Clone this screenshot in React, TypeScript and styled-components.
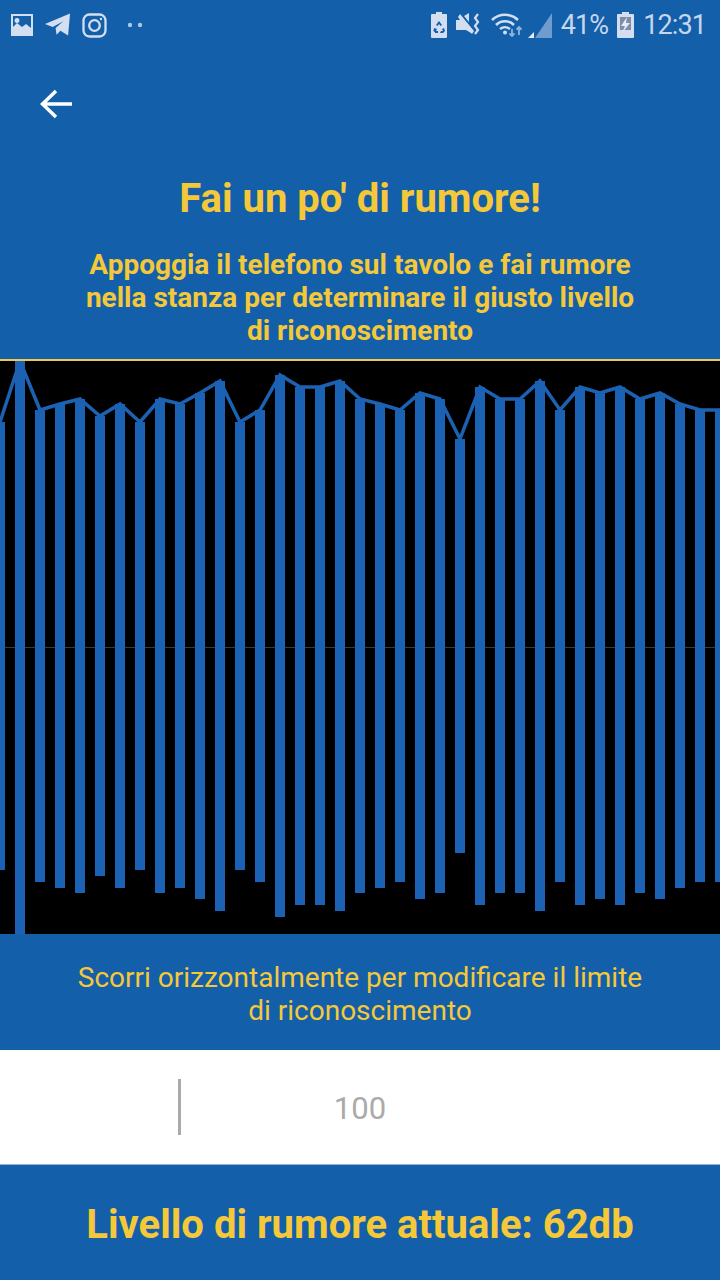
import React from 'react';
import styled, { createGlobalStyle } from 'styled-components';

const BAR_BOTTOMS = [
  870, 935, 882, 888, 893, 876, 888, 870, 893, 888, 899, 911, 870, 882, 917, 905, 905, 911, 893,
  888, 882, 899, 893, 853, 905, 893, 893, 911, 882, 905, 899, 905, 893, 899, 888, 882, 882,
];

const CHART_TOP = 361;
const CHART_HEIGHT = 573;

const topOf = (bottom: number) => Math.max(1292 - bottom, 361) - CHART_TOP;

const GlobalStyle = createGlobalStyle`
  html, body {
    margin: 0;
    padding: 0;
    background: #135fa9;
  }
  * {
    box-sizing: border-box;
  }
`;

const Screen = styled.div`
  width: 720px;
  height: 1280px;
  display: flex;
  flex-direction: column;
  overflow: hidden;
  background: #135fa9;
  font-family: Roboto, "Liberation Sans", sans-serif;
  color: #f5c83a;
`;

const StatusBar = styled.div`
  height: 50px;
  display: flex;
  align-items: center;
  justify-content: space-between;
  padding: 0 14px 0 10px;
  color: #d3dff0;
`;

const StatusGroup = styled.div`
  display: flex;
  align-items: center;
  gap: ${(p: { $gap: number }) => p.$gap}px;
`;

const StatusText = styled.span`
  font-size: 27px;
  line-height: 50px;
  letter-spacing: -0.9px;
  color: #c6d6ec;
`;

const Header = styled.div`
  height: 72px;
  padding: 36px 0 0 38px;
`;

const Title = styled.h1`
  margin: 0;
  padding-top: 55px;
  font-size: 40px;
  line-height: 44px;
  font-weight: 700;
  text-align: center;
`;

const Subtitle = styled.p`
  margin: 0;
  padding: 27px 78px 0;
  font-size: 28px;
  line-height: 33px;
  font-weight: 700;
  text-align: center;
`;

const Chart = styled.div`
  margin-top: 12px;
  height: 575px;
  flex: none;
  background: #000;
  border-top: 2px solid #f0c950;
`;

const Hint = styled.p`
  margin: 0;
  height: 116px;
  padding: 27px 70px 0;
  font-size: 28px;
  line-height: 33px;
  text-align: center;
`;

const Slider = styled.div`
  position: relative;
  height: 115px;
  display: flex;
  align-items: center;
  justify-content: center;
  padding-top: 2px;
  background: #fff;
  border-bottom: 1px solid #8db4da;
  font-size: 31px;
  color: #aaa;
`;

const Marker = styled.div`
  position: absolute;
  left: 178px;
  top: 29px;
  width: 3px;
  height: 56px;
  background: #aaa;
`;

const Footer = styled.div`
  flex: 1;
  display: flex;
  align-items: center;
  justify-content: center;
  padding-top: 3px;
  font-size: 40px;
  font-weight: 700;
`;

const GalleryIcon = () => (
  <svg width="24" height="24" viewBox="0 0 24 24">
    <path
      fill="currentColor"
      fillRule="evenodd"
      d="M1 1h22v22H1zM3 3v11l4-4 5 4 4-3 5 4V3zM7 5a2.500 2.500 0 1 1-.01 0z"
    />
  </svg>
);

const TelegramIcon = () => (
  <svg width="26" height="24" viewBox="0 0 27 24">
    <path fill="currentColor" d="M0 11 26 0l-2 23-8-5-4 4-1-7 8-7-11 6z" />
  </svg>
);

const InstagramIcon = () => (
  <svg width="25" height="25" viewBox="0 0 25 25" fill="none" stroke="currentColor" strokeWidth="2.300">
    <rect x="1.500" y="1.500" width="22" height="22" rx="6" />
    <circle cx="12.500" cy="12.500" r="5.300" />
    <circle cx="19" cy="6" r="1.200" fill="currentColor" stroke="none" />
  </svg>
);

const Dots = () => (
  <svg width="25" height="6" viewBox="0 0 25 6">
    <circle cx="12" cy="3" r="2.200" fill="#a9c5e6" />
    <circle cx="22" cy="3" r="2.200" fill="#a9c5e6" />
  </svg>
);

const RecycleBatteryIcon = () => (
  <svg width="16" height="26" viewBox="0 0 16 26">
    <path
      fill="currentColor"
      fillRule="evenodd"
      d="M5 0h6v2h4a1 1 0 0 1 1 1v22a1 1 0 0 1-1 1H1a1 1 0 0 1-1-1V3a1 1 0 0 1 1-1h4zM8 9l-3 4 1.500 1L8 12l1.500 2 1.500-1zM3 16l-.5 3 2 2H7v-2H5l1-2zM13 16l-2 1 1 2h-2l-1 2h3l2-2z"
    />
  </svg>
);

const MuteVibrateIcon = () => (
  <svg width="26" height="24" viewBox="0 0 26 24">
    <path fill="currentColor" d="M0 7h4L2 4l2-3 14 17-2 3-1-1-5-3H0zM8 3l5-3v9z" />
    <path fill="none" stroke="currentColor" strokeWidth="2.200" d="M22 1l-3 4 3 4-3 4 3 4-3 4" />
  </svg>
);

const WifiIcon = () => (
  <svg width="32" height="24" viewBox="0 0 32 24" fill="none" stroke="currentColor">
    <path strokeWidth="2.500" d="M1 7c7-7 19-7 26 0M5 12c5-5 13-5 18 0M9 16c3-2.500 7-2.500 10 0" />
    <circle cx="14" cy="19.500" r="2" fill="currentColor" stroke="none" />
    <path stroke="#8fb2da" strokeWidth="1.800" d="M21 16v7M18.500 20.500l2.500 2.500 2.500-2.500M28 22v-8M25.500 16.500l2.500-2.500 2.500 2.500" />
  </svg>
);

const SignalIcon = () => (
  <svg width="24" height="25" viewBox="0 0 24 25">
    <path fill="#6f9bcf" d="M24 0v25H7z" />
    <path fill="#e6edf7" d="M0 25l6-6v6z" />
  </svg>
);

const ChargingBatteryIcon = () => (
  <svg width="17" height="26" viewBox="0 0 17 26">
    <path
      fill="currentColor"
      d="M5 0h7v2h4a1 1 0 0 1 1 1v22a1 1 0 0 1-1 1H1a1 1 0 0 1-1-1V3a1 1 0 0 1 1-1h4z"
    />
    <path fill="#7d8ea6" d="M3 5h11v13H3z" />
    <path fill="#e6edf7" d="M10 5 4 14h4l-3 7 8-10H9z" />
  </svg>
);

const BackArrow = () => (
  <svg width="36" height="36" viewBox="0 0 36 36" fill="none" stroke="#fff" strokeWidth="3.500">
    <path d="M34 18H4M18 5 4.500 18 18 31" />
  </svg>
);

const WaveForm = () => {
  const points = BAR_BOTTOMS.map((b, i) => `${i * 20},${topOf(b)}`).join(' ');
  return (
    <svg width="720" height={CHART_HEIGHT} viewBox={`0 0 720 ${CHART_HEIGHT}`} style={{ display: 'block' }}>
      <rect x="0" y="286" width="720" height="1" fill="#3a3a3a" />
      {BAR_BOTTOMS.map((b, i) => (
        <rect
          key={i}
          x={i * 20 - 5}
          y={topOf(b)}
          width="10"
          height={b - CHART_TOP - topOf(b)}
          fill="#1c62b4"
        />
      ))}
      <polyline points={points} fill="none" stroke="#1c62b4" strokeWidth="3.500" />
    </svg>
  );
};

const App: React.FC = () => {
  return (
    <Screen>
      <GlobalStyle />
      <StatusBar>
        <StatusGroup $gap={11}>
          <GalleryIcon />
          <TelegramIcon />
          <InstagramIcon />
          <Dots />
        </StatusGroup>
        <StatusGroup $gap={9}>
          <RecycleBatteryIcon />
          <MuteVibrateIcon />
          <StatusGroup $gap={5}>
            <WifiIcon />
            <SignalIcon />
          </StatusGroup>
          <StatusText>41%</StatusText>
          <ChargingBatteryIcon />
          <StatusText>12:31</StatusText>
        </StatusGroup>
      </StatusBar>
      <Header>
        <BackArrow />
      </Header>
      <Title>Fai un po' di rumore!</Title>
      <Subtitle>
        Appoggia il telefono sul tavolo e fai rumore nella stanza per determinare il giusto livello di
        riconoscimento
      </Subtitle>
      <Chart>
        <WaveForm />
      </Chart>
      <Hint>Scorri orizzontalmente per modificare il limite di riconoscimento</Hint>
      <Slider>
        <Marker />
        100
      </Slider>
      <Footer>Livello di rumore attuale: 62db</Footer>
    </Screen>
  );
};

export default App;
